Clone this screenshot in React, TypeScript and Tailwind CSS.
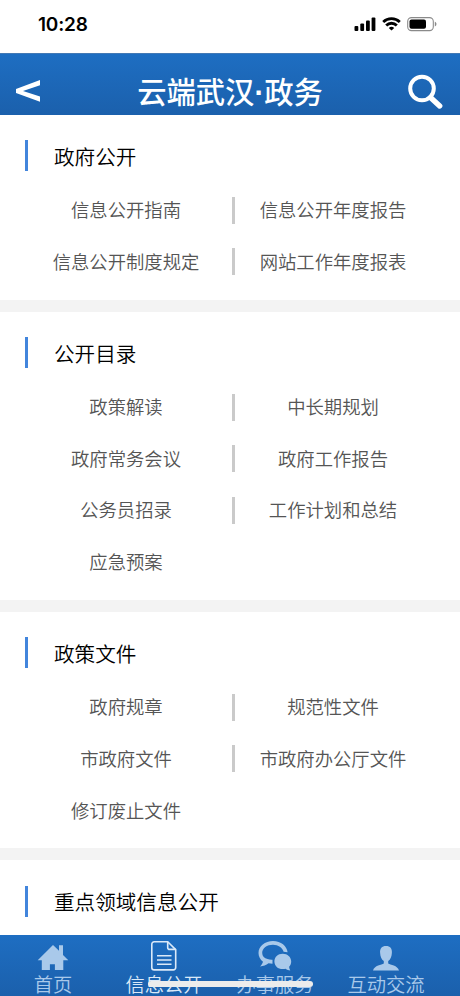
import React from 'react';

type SectionData = { title: string; items: string[] };

const sections: SectionData[] = [
  { title: '政府公开', items: ['信息公开指南', '信息公开年度报告', '信息公开制度规定', '网站工作年度报表'] },
  {
    title: '公开目录',
    items: ['政策解读', '中长期规划', '政府常务会议', '政府工作报告', '公务员招录', '工作计划和总结', '应急预案'],
  },
  { title: '政策文件', items: ['政府规章', '规范性文件', '市政府文件', '市政府办公厅文件', '修订废止文件'] },
  { title: '重点领域信息公开', items: [] },
];

function StatusBar() {
  return (
    <div className="flex h-[53px] shrink-0 items-start justify-between bg-white pl-[38px] pr-[22px] text-black">
      <span className="mt-[11px] font-['Inter'] text-[19px] leading-7 font-semibold tracking-[-0.2px]">10:28</span>
      <div className="mt-[16px] flex items-center gap-[6px]">
        <svg width="22" height="16" viewBox="0 0 22 16" fill="currentColor">
          <rect x="0.5" y="10" width="3.8" height="5" rx="1" />
          <rect x="6.3" y="7.5" width="3.8" height="7.5" rx="1" />
          <rect x="12" y="4.5" width="3.8" height="10.5" rx="1" />
          <rect x="17.6" y="1.5" width="3.8" height="13.5" rx="1" />
        </svg>
        <svg width="19" height="16" viewBox="0 0 19 16" fill="none" stroke="currentColor" strokeWidth="2.8">
          <path d="M1.2 5.9a12 12 0 0 1 16.6 0" />
          <path d="M4.2 9.5a7.4 7.4 0 0 1 10.6 0" />
          <path d="M9.5 14.6L6.8 12a4 4 0 0 1 5.4 0Z" fill="currentColor" stroke="none" />
        </svg>
        <svg width="31" height="16" viewBox="0 0 31 16">
          <rect x="0.7" y="1.6" width="25.6" height="13" rx="3.8" fill="none" stroke="#8a8a8a" strokeWidth="1.1" />
          <rect x="2.5" y="3.5" width="16.5" height="9.2" rx="2" fill="#000" />
          <path d="M27.8 5.8c2.2.7 2.2 3.9 0 4.6Z" fill="#8a8a8a" />
        </svg>
      </div>
    </div>
  );
}

function Header() {
  return (
    <header className="flex h-[62px] shrink-0 items-center justify-between border-t border-[#4379b5] bg-linear-to-b from-[#1e6ec2] to-[#1b60ac] pl-[16px] pr-[16px] pt-[14px] text-white">
      <svg width="36" height="24" viewBox="0 0 36 24" fill="currentColor">
        <path d="M24 0v5.200L7 11 24 16.500v5.200L0 13v-4Z" />
      </svg>
      <h1 className="mt-[2px] font-['Liberation_Sans','Noto_Sans_CJK_SC',sans-serif] text-[29.3px] leading-[36px] font-medium whitespace-nowrap">
        云端武汉<span className="font-bold">·</span>政务
      </h1>
      <svg width="36" height="36" viewBox="0 0 36 36" fill="none" stroke="currentColor">
        <circle cx="14" cy="14.5" r="11.8" strokeWidth="4" />
        <path d="M22.5 23.5L31.7 32" strokeWidth="5.4" strokeLinecap="round" />
      </svg>
    </header>
  );
}

function Section({ title, items }: SectionData) {
  const rows: string[][] = [];
  for (let i = 0; i < items.length; i += 2) rows.push(items.slice(i, i + 2));
  return (
    <section className="shrink-0 bg-white pt-[25.3px] pb-[12.3px]">
      <div className="mb-[13.1px] ml-[25px] flex h-[31px] items-center border-l-[3px] border-[#4285dc] pl-[26px]">
        <h2 className="pt-px text-[20.6px] leading-[31px] font-[350] text-black">{title}</h2>
      </div>
      {rows.map((row) => (
        <div key={row[0]} className="grid h-[51.6px] grid-cols-[212px_3px_196px] items-center pl-[20px] text-center text-[18.35px] font-[350] text-[#555555]">
          <span>{row[0]}</span>
          <span className={row[1] ? 'h-[27px] bg-[#cacaca]' : ''} />
          <span>{row[1]}</span>
        </div>
      ))}
    </section>
  );
}

function HomeIcon() {
  return (
    <svg width="32" height="28" viewBox="0 0 32 28" fill="currentColor">
      <path d="M16 1L0.7 16.2h4.1V26h8.1v-5.8h5V26h8.4v-9.8h5L26 11V1.2h-4v5.6Z" />
    </svg>
  );
}

function DocumentIcon() {
  return (
    <svg width="28" height="32" viewBox="0 0 28 32" fill="none" stroke="currentColor" strokeWidth="1.6">
      <path d="M4.2 1.8h13.5l8 7.8v17.9a2.4 2.4 0 0 1-2.4 2.4H4.2a2.4 2.4 0 0 1-2.4-2.4V4.2a2.4 2.4 0 0 1 2.4-2.4Z" />
      <path d="M17.7 1.8v5.6a2 2 0 0 0 2 2h6M7 15.8h14.5M7 20h14.5M7 24.2h14.5" />
    </svg>
  );
}

function ChatIcon() {
  return (
    <svg width="36" height="32" viewBox="0 0 36 32" fill="currentColor">
      <path d="M16 1C8 1 1.5 6.3 1.5 13c0 3.5 1.7 6.5 4.5 8.800-.5 1.800-1.600 3.400-3 4.700 3.400-.2 6.200-1.400 8.500-3.200 1.300.3 2.700.4 4 .4v-3.900c-1.900.1-3.500-.2-5-.8C7.400 18.200 5.200 16 5.200 12.900 5.200 8.200 10 4.700 16 4.700c5.300 0 9.500 2.900 10.600 7l4 .6C29.900 6 24 1 16 1Z" />
      <path d="M25.700 13.700c-4.800 0-8.300 3.400-8.300 7.700s3.500 7.700 8.300 7.700c1 0 2-.1 2.900-.4 1.400 1 3 1.600 4.700 1.700-.7-1.100-1.100-2.300-1.200-3.600 1.300-1.400 2.100-3.300 2.100-5.400 0-4.300-3.700-7.700-8.500-7.700Z" />
    </svg>
  );
}

function UserIcon() {
  return (
    <svg width="28" height="28" viewBox="0 0 28 28" fill="currentColor">
      <path d="M14 2c-4.200 0-6.200 2.600-5.900 6.800.2 3.900 1.400 6.800 3.700 8.300v2.400C9.700 21 2.400 21.200 1 26.500h26c-1.400-5.300-8.700-5.500-10.800-7v-2.400c2.300-1.500 3.500-4.400 3.700-8.300C20.200 4.600 18.200 2 14 2Z" />
    </svg>
  );
}

const tabs = [
  { label: '首页', icon: <HomeIcon />, active: false },
  { label: '信息公开', icon: <DocumentIcon />, active: true },
  { label: '办事服务', icon: <ChatIcon />, active: false },
  { label: '互动交流', icon: <UserIcon />, active: false },
];

function TabBar() {
  return (
    <nav className="relative h-[61px] shrink-0 bg-linear-to-b from-[#1e6ec2] to-[#1b60ac]">
      <div className="-ml-[2.5px] grid grid-cols-[111px_111px_111px_111px]">
        {tabs.map((tab) => (
          <div key={tab.label} className={`flex flex-col items-center ${tab.active ? 'text-[#dbe9f8]' : 'text-[#a9c9ea]'}`}>
            <div className="flex h-[37px] items-end justify-center">{tab.icon}</div>
            <span className="mt-px text-[19.3px] leading-[23px] font-[350]">{tab.label}</span>
          </div>
        ))}
      </div>
      <div className="absolute top-[46px] left-[148px] h-[6px] w-[165px] rounded-full bg-[#ececec]" />
    </nav>
  );
}

export default function App() {
  return (
    <div className="flex h-[996px] w-[460px] flex-col overflow-hidden bg-white font-['Noto_Sans_CJK_SC',sans-serif]">
      <StatusBar />
      <Header />
      <main className="flex min-h-0 flex-1 flex-col gap-[12px] overflow-hidden bg-[#f3f3f3]">
        {sections.map((section) => (
          <Section key={section.title} {...section} />
        ))}
      </main>
      <TabBar />
    </div>
  );
}
